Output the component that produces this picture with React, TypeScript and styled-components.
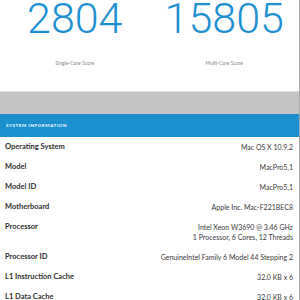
import styled, { createGlobalStyle } from "styled-components";

const GlobalStyle = createGlobalStyle`
  html, body {
    margin: 0;
    padding: 0;
    background: #ffffff;
  }
  body {
    font-family: Lato, "Open Sans", sans-serif;
    overflow: hidden;
  }
`;

const Page = styled.div`
  width: 299px;
  height: 300px;
  border-right: 1px solid #a9a9a9;
  background: #ffffff;
  overflow: hidden;
`;

const Scores = styled.div`
  display: grid;
  grid-template-columns: 1fr 1fr;
  height: 91px;
  border-bottom: 1px solid #e4e4e4;
`;

const ScoreBox = styled.div`
  display: flex;
  flex-direction: column;
  align-items: center;
`;

const ScoreValue = styled.div`
  margin-top: -3px;
  font-family: Roboto, sans-serif;
  font-weight: 300;
  font-size: 43px;
  line-height: 43px;
  color: #1e90d2;
`;

const ScoreLabel = styled.div`
  margin-top: 19px;
  font-size: 5px;
  line-height: 8px;
  color: #888888;
`;

const Spacer = styled.div`
  height: 22px;
  background: #c4c4c4;
`;

const SectionHeader = styled.div`
  height: 23px;
  background: #1b8fcf;
  color: #ffffff;
  display: flex;
  align-items: center;
  padding-left: 6px;
  font-size: 4.5px;
  font-weight: 700;
  letter-spacing: 0.6px;
  text-transform: uppercase;
`;

const Row = styled.div`
  display: flex;
  justify-content: space-between;
  align-items: flex-start;
  padding: 5px 6px 5px 5px;
`;

const Label = styled.div`
  font-size: 7.5px;
  line-height: 10px;
  font-weight: 700;
  color: #2f2f2f;
`;

const Value = styled.div`
  font-size: 7px;
  line-height: 10px;
  color: #3a3a3a;
  text-align: right;
`;

const rows: [string, string[]][] = [
  ["Operating System", ["Mac OS X 10.9.2"]],
  ["Model", ["MacPro5,1"]],
  ["Model ID", ["MacPro5,1"]],
  ["Motherboard", ["Apple Inc. Mac-F221BEC8"]],
  ["Processor", ["Intel Xeon W3690 @ 3.46 GHz", "1 Processor, 6 Cores, 12 Threads"]],
  ["Processor ID", ["GenuineIntel Family 6 Model 44 Stepping 2"]],
  ["L1 Instruction Cache", ["32.0 KB x 6"]],
  ["L1 Data Cache", ["32.0 KB x 6"]],
];

const App = () => {
  return (
    <>
      <GlobalStyle />
      <Page>
        <Scores>
          <ScoreBox>
            <ScoreValue>2804</ScoreValue>
            <ScoreLabel>Single-Core Score</ScoreLabel>
          </ScoreBox>
          <ScoreBox>
            <ScoreValue>15805</ScoreValue>
            <ScoreLabel>Multi-Core Score</ScoreLabel>
          </ScoreBox>
        </Scores>
        <Spacer />
        <SectionHeader>System Information</SectionHeader>
        {rows.map(([label, values]) => (
          <Row key={label}>
            <Label>{label}</Label>
            <Value>
              {values.map(v => <div key={v}>{v}</div>)}
            </Value>
          </Row>
        ))}
      </Page>
    </>
  );
};

export default App;
